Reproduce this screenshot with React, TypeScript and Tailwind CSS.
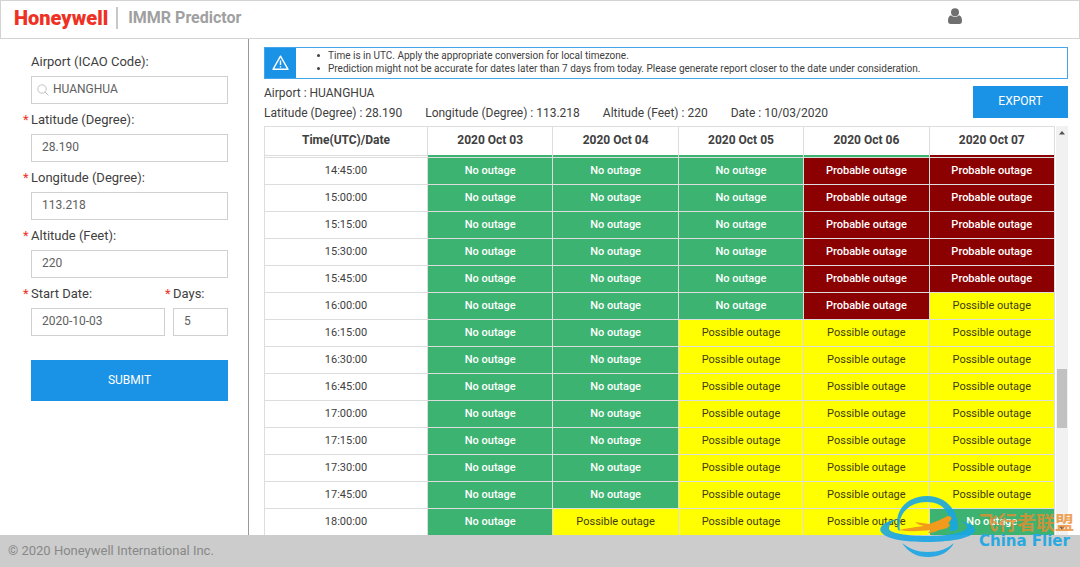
const dates = ["2020 Oct 03", "2020 Oct 04", "2020 Oct 05", "2020 Oct 06", "2020 Oct 07"];

type Status = "none" | "probable" | "possible";

const statusText: Record<Status, string> = {
  none: "No outage",
  probable: "Probable outage",
  possible: "Possible outage",
};

const statusClass: Record<Status, string> = {
  none: "bg-[#3cb371] font-medium text-white",
  probable: "bg-[#8b0000] font-medium text-white",
  possible: "bg-[#ffff00] text-[#403b10]",
};

const early: Status[] = ["none", "none", "none", "probable", "probable"];
const late: Status[] = ["none", "none", "possible", "possible", "possible"];

const rows: { time: string; cells: Status[] }[] = [
  { time: "14:45:00", cells: early },
  { time: "15:00:00", cells: early },
  { time: "15:15:00", cells: early },
  { time: "15:30:00", cells: early },
  { time: "15:45:00", cells: early },
  { time: "16:00:00", cells: ["none", "none", "none", "probable", "possible"] },
  { time: "16:15:00", cells: late },
  { time: "16:30:00", cells: late },
  { time: "16:45:00", cells: late },
  { time: "17:00:00", cells: late },
  { time: "17:15:00", cells: late },
  { time: "17:30:00", cells: late },
  { time: "17:45:00", cells: late },
  { time: "18:00:00", cells: ["none", "possible", "possible", "possible", "none"] },
];

const inputClass = "block h-7 w-full border border-[#d0d0d0] bg-white px-2.5 pb-0.5 text-xs text-[#606060] outline-none";

function Field({ id, label, value, required = true }: { id: string; label: string; value: string; required?: boolean }) {
  return (
    <div>
      <label htmlFor={id} className="relative block h-[30px] pt-1.5 text-[13px] leading-5 text-[#404040]">
        {required && <span className="absolute -left-2 text-[#ee3124]">*</span>}
        {label}
      </label>
      <div className="relative">
        {!required && (
          <svg className="absolute left-1.5 top-2 h-3 w-3" viewBox="0 0 12 12" fill="none" stroke="#c4c4c4">
            <circle cx="5" cy="5" r="4.2" />
            <path d="M8 8l3.5 3.5" />
          </svg>
        )}
        <input id={id} defaultValue={value} className={required ? inputClass : inputClass + " pl-[21px]"} />
      </div>
    </div>
  );
}

function Header() {
  return (
    <header className="flex h-[39px] shrink-0 items-start border border-[#d3d3d3] pl-[13px] pt-1.5">
      <span className="text-xl font-black leading-[22px] text-[#ee3124]">Honeywell</span>
      <span className="ml-2 h-[22px] w-0.5 bg-[#c8c8c8]" />
      <h1 className="ml-2.5 text-base font-bold leading-[22px] text-[#a0a0a0]">IMMR Predictor</h1>
      <button aria-label="Account" className="ml-auto mr-[117px] mt-px text-[#707070]">
        <svg className="h-4 w-3.5" viewBox="0 0 14 16" fill="currentColor">
          <circle cx="7" cy="4.2" r="4" />
          <path d="M3 7.2c2.3 2 5.7 2 8 0 2.2.5 3 2.800 3 5.800 0 1.900-1 3-2.600 3H2.600C1 16 0 14.900 0 13c0-3 .8-5.300 3-5.800z" />
        </svg>
      </button>
    </header>
  );
}

function Sidebar() {
  return (
    <aside className="w-[249px] shrink-0 border-r border-[#999999] pl-[31px] pr-5 pt-[7px]">
      <form className="flex flex-col" onSubmit={(e) => e.preventDefault()}>
        <Field id="airport" label="Airport (ICAO Code):" value="HUANGHUA" required={false} />
        <Field id="latitude" label="Latitude (Degree):" value="28.190" />
        <Field id="longitude" label="Longitude (Degree):" value="113.218" />
        <Field id="altitude" label="Altitude (Feet):" value="220" />
        <div className="grid grid-cols-[134px_1fr] gap-2">
          <Field id="start" label="Start Date:" value="2020-10-03" />
          <Field id="days" label="Days:" value="5" />
        </div>
        <button className="mt-6 h-[41px] bg-[#1a92e6] pb-0.5 text-xs text-white">SUBMIT</button>
      </form>
    </aside>
  );
}

function Notice() {
  return (
    <div className="flex h-8 border border-[#45a5ea] text-[#404040]">
      <div className="flex w-[31px] shrink-0 items-center justify-center bg-[#1a92e6]">
        <svg className="h-4 w-[17px]" viewBox="0 0 17 16" fill="none" stroke="white" strokeWidth="1.4" strokeLinejoin="round">
          <path d="M8.5 1.2L16 14.3H1z" />
          <path d="M8.5 5.5v4.5M8.5 11.2v1.4" />
        </svg>
      </div>
      <ul className="pl-[21px] pt-px text-[10px] leading-[13px]">
        <li className="flex items-center gap-2 before:size-[3px] before:rounded-full before:bg-[#404040]">
          Time is in UTC. Apply the appropriate conversion for local timezone.
        </li>
        <li className="flex items-center gap-2 before:size-[3px] before:rounded-full before:bg-[#404040]">
          Prediction might not be accurate for dates later than 7 days from today. Please generate report closer to the date under consideration.
        </li>
      </ul>
    </div>
  );
}

function Summary() {
  return (
    <div className="flex h-[47px] justify-between text-xs leading-5 text-[#404040]">
      <div className="pt-1">
        <p>Airport : HUANGHUA</p>
        <div className="flex gap-[23px]">
          <span>Latitude (Degree) : 28.190</span>
          <span>Longitude (Degree) : 113.218</span>
          <span>Altitude (Feet) : 220</span>
          <span>Date : 10/03/2020</span>
        </div>
      </div>
      <button className="mt-[7px] h-8 w-[95px] bg-[#1a92e6] pb-0.5 text-xs text-white">EXPORT</button>
    </div>
  );
}

function OutageTable() {
  return (
    <div className="flex min-h-0 flex-1 overflow-hidden">
      <div className="min-w-0 flex-1 overflow-hidden">
        <table className="w-full table-fixed border-separate border-spacing-0 border-l border-t border-[#dddddd] text-center text-[11px] leading-4">
          <colgroup>
            <col className="w-[163px]" />
            {dates.map((d) => (
              <col key={d} />
            ))}
          </colgroup>
          <thead>
            <tr className="h-7 text-xs text-[#404040]">
              <th className="border-r border-[#dddddd] p-0 pb-0.5 font-bold">Time(UTC)/Date</th>
              {dates.map((d) => (
                <th key={d} className="border-r border-[#dddddd] p-0 pb-0.5 font-bold">{d}</th>
              ))}
            </tr>
          </thead>
          <tbody>
            {/* tail of the row scrolled under the header */}
            <tr className="h-[3px]" aria-hidden="true">
              <td className="border-b border-r border-t border-[#dddddd] p-0" />
              {(["none", "none", "none", "none", "probable"] as Status[]).map((s, i) => (
                <td key={i} className={"border-b border-r border-[#dddddd] p-0 " + statusClass[s]} />
              ))}
            </tr>
            {rows.map((row) => (
              <tr key={row.time} className="h-[27px]">
                <td className="border-b border-r border-[#dddddd] p-0 text-[#404040]">{row.time}</td>
                {row.cells.map((s, i) => (
                  <td key={i} className={"border-b border-r border-[#dddddd] p-0 " + statusClass[s]}>{statusText[s]}</td>
                ))}
              </tr>
            ))}
          </tbody>
        </table>
      </div>
      <div className="ml-px flex w-3 shrink-0 flex-col items-center bg-[#f1f1f1]">
        <svg className="mt-1 h-1.5 w-1.5" viewBox="0 0 6 6" fill="#505050">
          <path d="M0 4.5L3 1l3 3.5z" />
        </svg>
        <div className="mt-[233px] h-[59px] w-2.5 bg-[#c1c1c1]" />
        <svg className="mb-1 mt-auto h-1.5 w-1.5" viewBox="0 0 6 6" fill="#505050">
          <path d="M0 1.5L3 5l3-3.5z" />
        </svg>
      </div>
    </div>
  );
}

function Watermark() {
  return (
    <div className="pointer-events-none absolute bottom-2.5 right-1.5 flex items-center">
      <svg className="h-[64px] w-[96px]" viewBox="0 0 96 64">
        <g fill="#18a5e4" fillOpacity="0.9">
          <path d="M18 37C13 18 27 3 47 3c19 0 31 14 31 32 0 2-3 3-8 3C72 20 63 9 47 9 29 9 17 21 20 38z" />
          <path d="M17 26C4 29-2 34 1 39c5 7 23 10 46 10 27 0 48-5 48-12 0-4-5-7-15-9 6 3 8 5 7 7-3 5-20 8-40 8-20 0-37-3-38-7 0-4 2-7 8-10z" />
          <path d="M22 50c7 10 15 14 26 14 12 0 21-5 26-14-7 6-15 9-26 9s-18-3-26-9z" />
        </g>
        <path fill="#f29a1c" d="M19 37c8-2 17-3 25-4-4-1-7-2-9-4l14 2c7-2 12-5 19-8 5 0 4 4 0 7 5 3-2 6-9 7-3 2-7 3-11 3l3-3c-10 1-21 2-32 0z" />
      </svg>
      <div className="ml-[3px] mt-3">
        <div className="font-['Noto_Sans_CJK_SC',sans-serif] text-[19px] font-bold leading-5 text-[#ed8b2f]/80">飞行者联盟</div>
        <div className="font-['DejaVu_Sans',sans-serif] text-[15px] font-bold leading-[18px] text-[#29a9e1]">China Flier</div>
      </div>
    </div>
  );
}

export default function App() {
  return (
    <div className="relative flex h-screen flex-col overflow-hidden bg-white font-[Roboto,sans-serif]">
      <Header />
      <div className="flex min-h-0 flex-1">
        <Sidebar />
        <main className="flex min-w-0 flex-1 flex-col pl-[15px] pr-3 pt-2">
          <Notice />
          <Summary />
          <OutageTable />
        </main>
      </div>
      <footer className="h-8 shrink-0 bg-[#cccccc] pl-2 text-[13px] leading-8 text-[#888888]">© 2020 Honeywell International Inc.</footer>
      <Watermark />
    </div>
  );
}
